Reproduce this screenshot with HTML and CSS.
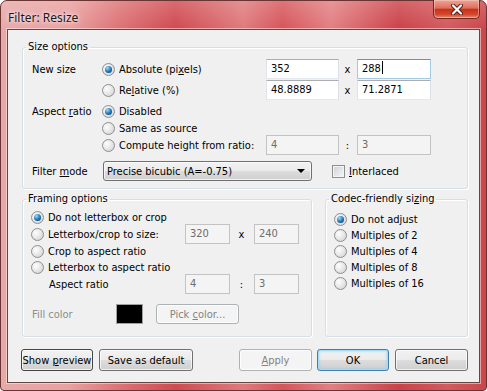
FILE: index.html
```html
<!DOCTYPE html>
<html lang="en">
<head>
  <meta charset="UTF-8">
  <title>Filter: Resize</title>
  <link rel="stylesheet" href="styles.css">
</head>
<body>
  <div class="window">
    <div class="titlebar">
      <span class="title">Filter: Resize</span>
      <div class="close">
        <svg width="12" height="11" viewBox="0 0 12 11">
          <path d="M2 1.5 L10 9.5 M10 1.5 L2 9.5" stroke="#5a1a10" stroke-width="4" stroke-linecap="round"/>
          <path d="M2 1.5 L10 9.5 M10 1.5 L2 9.5" stroke="#fff" stroke-width="2.2" stroke-linecap="round"/>
        </svg>
      </div>
    </div>

    <div class="client">
      <fieldset class="group size">
        <legend>Size options</legend>
        <div class="size-grid">
          <span class="lbl">New size</span>
          <label class="radio checked"><span class="bullet"></span><span>Absolute (pi<u>x</u>els)</span></label>
          <div class="field">352</div>
          <span class="sep">x</span>
          <div class="field focus">288<span class="caret"></span></div>

          <span></span>
          <label class="radio"><span class="bullet"></span><span>Re<u>l</u>ative (%)</span></label>
          <div class="field">48.8889</div>
          <span class="sep">x</span>
          <div class="field">71.2871</div>

          <span class="lbl">Aspect <u>r</u>atio</span>
          <label class="radio checked"><span class="bullet"></span><span>Disabled</span></label>
          <span></span><span></span><span></span>

          <span></span>
          <label class="radio"><span class="bullet"></span><span>Same as source</span></label>
          <span></span><span></span><span></span>

          <span></span>
          <label class="radio"><span class="bullet"></span><span>Compute height from ratio:</span></label>
          <div class="field off">4</div>
          <span class="sep">:</span>
          <div class="field off">3</div>
        </div>

        <div class="filter-row">
          <span class="lbl filter-lbl">Filter <u>m</u>ode</span>
          <div class="select">
            <span>Precise bicubic (A=-0.75)</span>
            <span class="arrow"></span>
          </div>
          <label class="check"><span class="box"></span><span><u>I</u>nterlaced</span></label>
        </div>
      </fieldset>

      <div class="lower">
        <fieldset class="group framing">
          <legend>Framing options</legend>
          <div class="framing-grid">
            <label class="radio checked"><span class="bullet"></span><span>Do not letterbox or crop</span></label>
            <span></span><span></span><span></span>

            <label class="radio"><span class="bullet"></span><span>Letterbox/crop to size:</span></label>
            <div class="field off">320</div>
            <span class="sep">x</span>
            <div class="field off">240</div>

            <label class="radio"><span class="bullet"></span><span>Crop to aspect ratio</span></label>
            <span></span><span></span><span></span>

            <label class="radio"><span class="bullet"></span><span>Letterbox to aspect ratio</span></label>
            <span></span><span></span><span></span>

            <span class="lbl indent">Aspect ratio</span>
            <div class="field off">4</div>
            <span class="sep">:</span>
            <div class="field off">3</div>
          </div>
          <div class="fill-row">
            <span class="lbl dim fill-lbl">Fill color</span>
            <div class="swatch"></div>
            <div class="btn off pick"><span>Pick <u>c</u>olor...</span></div>
          </div>
        </fieldset>

        <fieldset class="group codec">
          <legend>Codec-friendly si<u>z</u>ing</legend>
          <div class="codec-list">
            <label class="radio checked"><span class="bullet"></span><span>Do not adjust</span></label>
            <label class="radio"><span class="bullet"></span><span>Multiples of 2</span></label>
            <label class="radio"><span class="bullet"></span><span>Multiples of 4</span></label>
            <label class="radio"><span class="bullet"></span><span>Multiples of 8</span></label>
            <label class="radio"><span class="bullet"></span><span>Multiples of 16</span></label>
          </div>
        </fieldset>
      </div>

      <div class="buttons">
        <div class="btn preview"><span>Show <u>p</u>review</span></div>
        <div class="btn save"><span>Save as default</span></div>
        <div class="btn off apply"><span><u>A</u>pply</span></div>
        <div class="btn default ok"><span>OK</span></div>
        <div class="btn cancel"><span>Cancel</span></div>
      </div>
    </div>
  </div>
</body>
</html>
```

FILE: styles.css
```css
body {
  margin: 0;
  background: #fff;
  font-family: Tahoma, "DejaVu Sans Condensed", "DejaVu Sans", sans-serif;
  font-size: 11px;
  color: #000;
}

u {
  text-decoration: underline;
  text-underline-offset: 1px;
}

/* window frame */
.window {
  width: 487px;
  height: 391px;
  box-sizing: border-box;
  display: flex;
  flex-direction: column;
  padding: 0 6px 7px;
  border: 1px solid #6a3434;
  border-radius: 7px 7px 4px 4px;
  background:
    linear-gradient(to bottom, rgba(255, 255, 255, 0.18), rgba(255, 255, 255, 0) 28px),
    linear-gradient(to right, #e7a9a9 0%, #eaa0a0 14%, #dd7476 24%, #d04a50 36%, #df7a7c 50%, #d6555a 58%, #e27f82 68%, #cb4248 82%, #d35a5e 92%, #c9464b 100%);
}

.titlebar {
  height: 28px;
  display: flex;
  align-items: flex-start;
}

.title {
  margin: 8px 0 0 1px;
  font-family: "Noto Sans", "Open Sans", sans-serif;
  font-size: 12px;
  color: #1a1a1a;
  text-shadow: 0 0 6px rgba(255, 255, 255, 0.9), 0 0 3px rgba(255, 255, 255, 0.8);
}

.close {
  margin-left: auto;
  margin-top: -1px;
  width: 47px;
  height: 19px;
  box-sizing: border-box;
  display: flex;
  align-items: center;
  justify-content: center;
  border: 1px solid #6e2a22;
  border-top: none;
  border-radius: 0 0 5px 5px;
  background: linear-gradient(#eba597 0%, #df6f5c 45%, #c7321a 52%, #d4472c 80%, #e98a70 100%);
  box-shadow: inset 0 0 0 1px rgba(255, 220, 210, 0.45);
}

.client {
  flex: 1;
  display: flex;
  flex-direction: column;
  padding: 0 11px 10px 14px;
  border: 1px solid #634646;
  background: #f0f0f0;
  box-shadow: 0 0 0 1px rgba(255, 235, 235, 0.55);
}

/* group boxes */
.group {
  margin: 0;
  padding: 0;
  border: 1px solid #d5dfe5;
  border-radius: 3px;
  box-shadow: inset 1px 1px 0 #fff, 1px 1px 0 #fff;
}

.group legend {
  margin-left: 3px;
  padding: 0 2px;
  line-height: 14px;
}

.size {
  margin-top: 10px;
  padding-bottom: 7px;
}

.size-grid {
  display: grid;
  grid-template-columns: 70px 164px 73px 18px 74px;
  grid-template-rows: 20px 22px 20px 14px 20px;
  align-items: center;
  padding: 5px 0 0 9px;
}

.filter-row {
  display: flex;
  align-items: center;
  height: 20px;
  margin-top: 6px;
  padding-left: 9px;
}

.filter-lbl {
  width: 71px;
}

.select {
  width: 209px;
  height: 20px;
  box-sizing: border-box;
  display: flex;
  align-items: center;
  justify-content: space-between;
  padding: 0 6px 0 3px;
  border: 1px solid #707070;
  border-radius: 3px;
  background: linear-gradient(#f2f2f2 0%, #ebebeb 50%, #dddddd 51%, #cfcfcf 100%);
  box-shadow: inset 0 0 0 1px rgba(255, 255, 255, 0.7);
}

.arrow {
  width: 0;
  height: 0;
  border-left: 4px solid transparent;
  border-right: 4px solid transparent;
  border-top: 4px solid #000;
}

.check {
  display: flex;
  align-items: center;
  gap: 4px;
  margin-left: 20px;
}

.box {
  width: 13px;
  height: 13px;
  box-sizing: border-box;
  border: 1px solid #8e8f8f;
  background: linear-gradient(135deg, #cdd1d6, #f7f7f7);
  box-shadow: inset 0 0 0 1px #f4f4f4;
}

/* radios */
.radio {
  display: flex;
  align-items: center;
  gap: 4px;
  white-space: nowrap;
}

.bullet {
  position: relative;
  flex: none;
  width: 13px;
  height: 13px;
  box-sizing: border-box;
  border: 1px solid #8e8f8f;
  border-radius: 50%;
  background: radial-gradient(circle at 35% 35%, #fdfdfd 0%, #e9e9e9 45%, #c9cbcd 100%);
}

.checked .bullet::after {
  content: "";
  position: absolute;
  left: 2px;
  top: 2px;
  width: 7px;
  height: 7px;
  border-radius: 50%;
  background: radial-gradient(circle at 35% 30%, #a9dcf8 0%, #3a8ccb 40%, #0d5290 75%, #083a66 100%);
}

/* text fields */
.field {
  height: 20px;
  box-sizing: border-box;
  padding: 0 4px;
  line-height: 18px;
  border: 1px solid #abadb3;
  border-color: #abadb3 #dbdfe6 #e3e9ef #e2e3ea;
  background: #fff;
  white-space: nowrap;
}

.field.focus {
  border-color: #5b97cf #a4c9e3 #a4c9e3 #a4c9e3;
}

.caret {
  display: inline-block;
  width: 1px;
  height: 13px;
  margin-left: 1px;
  vertical-align: -2px;
  background: #000;
}

.field.off {
  color: #6d6d6d;
  background: #f4f4f4;
  border-color: #c3c3c3;
}

.sep {
  text-align: center;
  padding-right: 1px;
}

.dim {
  color: #8d8d8d;
}

/* lower boxes */
.lower {
  display: flex;
  gap: 13px;
  margin-top: 3px;
  height: 145px;
}

.framing {
  width: 290px;
  box-sizing: border-box;
}

.framing-grid {
  display: grid;
  grid-template-columns: 154px 45px 24px 45px;
  grid-template-rows: 16px 18px 16px 16px 18px;
  align-items: center;
  padding: 3px 0 0 8px;
}

.indent {
  padding-left: 18px;
}

.fill-row {
  display: flex;
  align-items: center;
  margin-top: 11px;
  padding-left: 9px;
}

.fill-lbl {
  width: 84px;
}

.swatch {
  width: 27px;
  height: 20px;
  box-sizing: border-box;
  border: 1px solid #a0a0a0;
  background: #000;
}

.codec {
  flex: 1;
}

.codec-list {
  display: flex;
  flex-direction: column;
  padding: 5px 0 0 8px;
}

.codec-list .radio {
  height: 16px;
}

/* buttons */
.btn {
  height: 22px;
  box-sizing: border-box;
  display: flex;
  align-items: center;
  justify-content: center;
  white-space: nowrap;
  border: 1px solid #707070;
  border-radius: 3px;
  background: linear-gradient(#f2f2f2 0%, #ebebeb 50%, #dddddd 51%, #cfcfcf 100%);
  box-shadow: inset 0 0 0 1px rgba(255, 255, 255, 0.7);
}

.btn.off {
  color: #838383;
  border-color: #adb2b5;
  background: #f4f4f4;
}

.btn.default {
  border-color: #3c7fb1;
  box-shadow: inset 0 0 0 1px #a3dcf7, inset 0 0 2px 2px rgba(120, 200, 240, 0.35);
}

.pick {
  width: 83px;
  height: 20px;
  margin-left: 13px;
}

.buttons {
  display: flex;
  margin: 12px 0 0 -1px;
}

.preview { width: 72px; border-color: #444; }
.save { width: 94px; margin-left: 6px; }
.apply { width: 73px; margin-left: auto; }
.ok { width: 72px; margin-left: 5px; }
.cancel { width: 73px; margin-left: 6px; }
```
